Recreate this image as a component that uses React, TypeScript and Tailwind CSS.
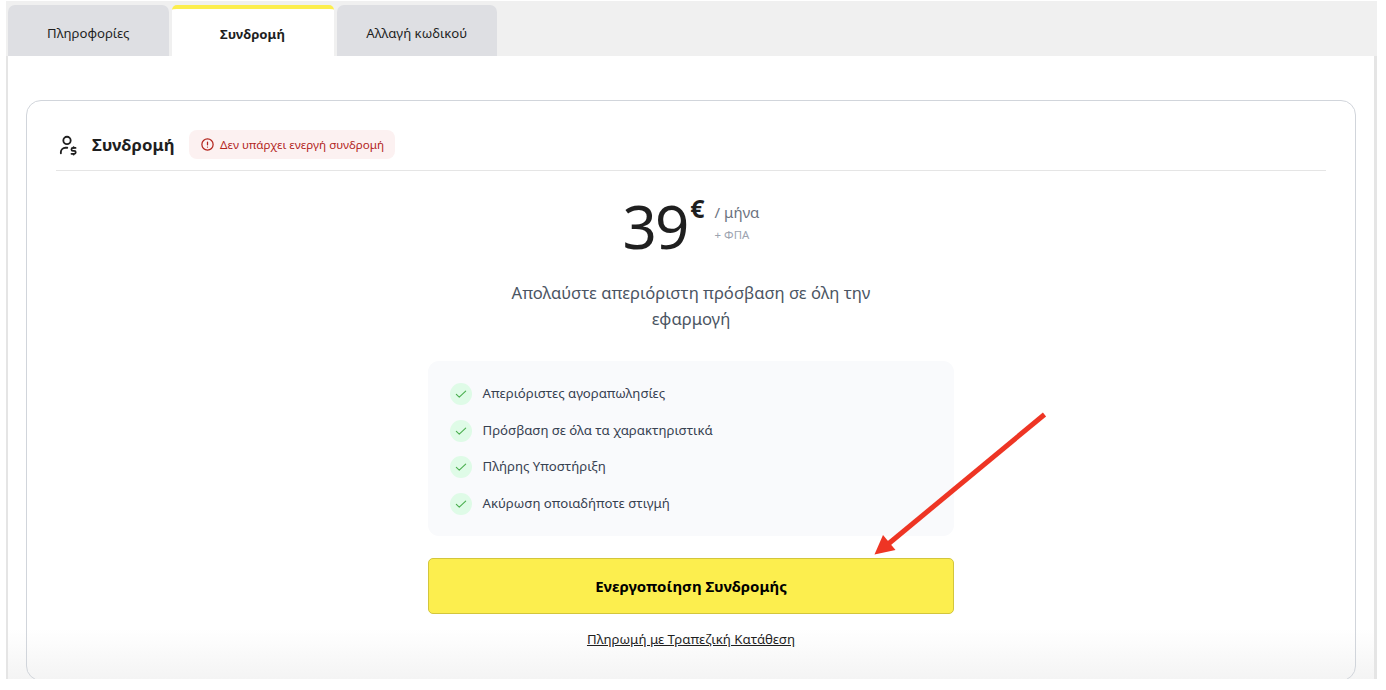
import React from 'react';

type Tab = {
  label: string;
  active?: boolean;
};

const tabs: Tab[] = [
  { label: 'Πληροφορίες' },
  { label: 'Συνδρομή', active: true },
  { label: 'Αλλαγή κωδικού' }
];

const features = [
  'Απεριόριστες αγοραπωλησίες',
  'Πρόσβαση σε όλα τα χαρακτηριστικά',
  'Πλήρης Υποστήριξη',
  'Ακύρωση οποιαδήποτε στιγμή'
];

const UserDollarIcon = () => (
  <svg
    width="22"
    height="22"
    viewBox="0 0 24 24"
    fill="none"
    stroke="#1f1f1f"
    strokeWidth="2"
    strokeLinecap="round"
    strokeLinejoin="round"
  >
    <circle cx="12" cy="7" r="4" />
    <path d="M5.3 21v-1a5 5 0 0 1 5 -5h2" />
    <path d="M21.3 15.2h-2.8a1.6 1.6 0 0 0 0 3.2h1.4a1.6 1.6 0 0 1 0 3.2h-3" />
    <path d="M19.2 21.6v.8m0 -8v.8" />
  </svg>
);

const AlertIcon = () => (
  <svg width="15" height="15" viewBox="0 0 24 24" fill="none" stroke="#b3261e" strokeWidth="2" strokeLinecap="round">
    <circle cx="12" cy="12" r="9" />
    <path d="M12 8v4.5M12 16v.01" />
  </svg>
);

const CheckIcon = () => (
  <svg width="14" height="14" viewBox="0 0 24 24" fill="none" stroke="#4caf50" strokeWidth="1.9" strokeLinecap="round" strokeLinejoin="round">
    <path d="M4 12.5l5 5L20 7" />
  </svg>
);

const Tabs = () => (
  <div className="flex h-[55px] gap-[3px] bg-[#f0f0f0] pl-0.5 pt-1">
    {tabs.map((tab) => (
      <button
        key={tab.label}
        type="button"
        className={
          tab.active
            ? 'w-[162px] rounded-t-[5px] border-t-4 border-[#fcee4e] bg-white pt-1 text-[13.2px] font-bold text-[#1f1f1f]'
            : 'w-[160.5px] rounded-t-[7px] bg-[#dedfe3] pt-1.5 text-[13.2px] text-[#1f1f1f]'
        }
      >
        {tab.label}
      </button>
    ))}
  </div>
);

const Arrow = () => (
  <svg className="pointer-events-none absolute left-[870px] top-[405px]" width="185" height="155" viewBox="870 405 185 155">
    <path d="M1044.5 414.5L887 545" stroke="#ee3524" strokeWidth="5" />
    <path d="M874.5 554.5L883 535L895.5 550Z" fill="#ee3524" />
  </svg>
);

const App = () => {
  return (
    <div className="relative h-[690px] w-[1386px] overflow-hidden bg-white pl-1.5 pt-px font-['Noto_Sans','Open_Sans',sans-serif]">
      <div className="h-[678px] w-[1371px] overflow-hidden bg-[#f0f0f0]">
        <Tabs />
        <div className="h-[623px] bg-[#e5e5e5] pl-0.5 pr-[3px]">
          <div className="h-full bg-[linear-gradient(to_bottom,#fff_92%,#f4f4f4_100%)] px-[18px] pt-11">
            <div className="h-[581px] rounded-[15px] border border-[#d1d5db] px-[29px] pt-[29px]">
              <div className="flex h-[41px] items-start border-b border-[#e5e5e5]">
                <div className="flex h-[29px] items-center">
                  <UserDollarIcon />
                  <h1 className="ml-3.5 w-[97px] whitespace-nowrap text-[16.8px] font-bold text-[#1f1f1f]">Συνδρομή</h1>
                  <div className="flex h-[29px] w-[206px] items-center gap-[5px] whitespace-nowrap rounded-lg bg-[#fcf1f1] pl-[11px] text-[11.65px] text-[#b3261e]">
                    <AlertIcon />
                    <span>Δεν υπάρχει ενεργή συνδρομή</span>
                  </div>
                </div>
              </div>

              <div className="mx-auto flex w-[526px] flex-col items-center">
                <div className="mt-[25px] flex h-[60px] items-start">
                  <span className="text-[60px] leading-[60px] tracking-[-2px] text-[#1f1f1f]">39</span>
                  <span className="ml-[3px] text-[25px] font-bold leading-[25px] text-[#1f1f1f]">€</span>
                  <div className="ml-2.5 mt-1 whitespace-nowrap">
                    <p className="text-[15px] leading-[24px] text-[#6b7280]">/ μήνα</p>
                    <p className="text-[11.4px] leading-[21px] text-[#9ca3af]">+ ΦΠΑ</p>
                  </div>
                </div>
                <p className="mt-6 w-[400px] text-center text-[16.6px] leading-[26px] text-[#4b5563]">
                  Απολαύστε απεριόριστη πρόσβαση σε όλη την
                  <br />
                  εφαρμογή
                </p>
                <ul className="mt-[29px] flex h-[175px] w-full flex-col gap-[14.5px] rounded-[11px] bg-[#f9fafc] pl-[22px] pt-[22px]">
                  {features.map((feature) => (
                    <li key={feature} className="flex h-[22px] items-center gap-[10.5px] whitespace-nowrap text-[13.2px] text-[#374151]">
                      <span className="flex size-[22px] items-center justify-center rounded-full bg-[#dffbe7]">
                        <CheckIcon />
                      </span>
                      {feature}
                    </li>
                  ))}
                </ul>
                <button
                  type="button"
                  className="mt-[22px] h-14 w-full rounded-[5px] border border-[#d3c63c] bg-[#fcee4e] text-[15px] font-bold text-black"
                >
                  Ενεργοποίηση Συνδρομής
                </button>
                <a href="#" className="mt-[15px] text-[13.25px] leading-5 text-[#1f1f1f] underline">
                  Πληρωμή με Τραπεζική Κατάθεση
                </a>
              </div>
            </div>
          </div>
        </div>
      </div>
      <Arrow />
    </div>
  );
};

export default App;
